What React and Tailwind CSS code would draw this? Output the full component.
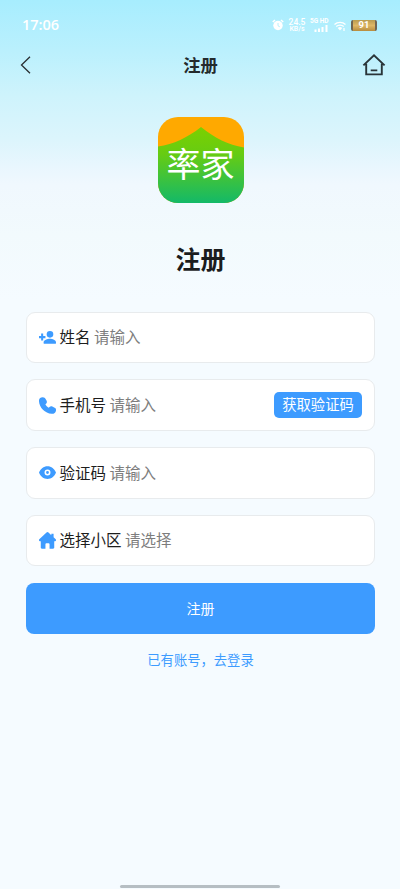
import React from "react";

const iconClass = "h-[17px] w-[17px] shrink-0 fill-[#3d9bff]";

function AddUserIcon() {
  return (
    <svg viewBox="0 0 24 24" className="h-[17px] w-[17px] shrink-0 fill-[#3d9bff]">
      <path d="M15.500 12.200a4.700 4.700 0 1 0 0-9.400 4.700 4.700 0 0 0 0 9.400ZM5.900 10V6.500H3V10H0v2.900h3v3.500h2.900v-3.500h3.200V10ZM15.500 13.600c-3.500 0-9 1.700-9 5v1c0 .8.4 1.200 1.200 1.200h15.100c.8 0 1.200-.4 1.200-1.200v-1c0-3.300-5-5-8.500-5Z" />
    </svg>
  );
}

function PhoneIcon() {
  return (
    <svg viewBox="0 0 24 24" className={iconClass}>
      <path d="M1.600 1.300C3.400 0 7 0 8.400 1.500l2.200 3.600c.9 1.600.7 3-.7 4.300L9 10.300c1 2 2.600 3.600 4.700 4.700l1.100-1c1.200-1.100 2.600-1.300 4-.5l3.900 2.200c1.200.7 1.500 1.900 1.300 3.300-.5 3.500-2.900 5-6.100 4.800C8.700 23.200.3 14.900 0 6c-.1-2 .3-3.700 1.600-4.700Z" />
    </svg>
  );
}

function EyeIcon() {
  return (
    <svg viewBox="0 0 24 24" className={iconClass}>
      <path fillRule="evenodd" d="M12 3C6.500 3 2.200 6.500 0 12c2.200 5.500 6.500 9 12 9s9.800-3.500 12-9C21.800 6.500 17.500 3 12 3Zm0 4.800a4.200 4.200 0 1 1 0 8.400 4.200 4.200 0 0 1 0-8.400Zm0 2.200a2 2 0 1 0 0 4 2 2 0 0 0 0-4Z" />
    </svg>
  );
}

function HouseIcon() {
  return (
    <svg viewBox="0 0 24 24" className={iconClass}>
      <path d="M10.600.8a2 2 0 0 1 2.800 0l4 3.700V2.600h3.200v4.900l3 2.900c1 1 .4 2.600-.9 2.600h-1.200v9c0 1-.6 1.600-1.600 1.600h-5v-6.400c0-.8-.5-1.300-1.300-1.300h-3.200c-.8 0-1.300.5-1.300 1.300v6.400h-5c-1 0-1.600-.6-1.600-1.600v-9H1.300c-1.300 0-1.900-1.600-.9-2.600Z" />
    </svg>
  );
}

function StatusBar() {
  return (
    <div className="flex h-[50px] items-center pl-[22px] pr-[23px] text-white">
      <span className="font-['Open_Sans',sans-serif] text-[14.500px] font-semibold leading-none">17:06</span>
      <div className="ml-auto flex items-center">
        <svg viewBox="0 0 24 24" className="h-3 w-3">
          <circle cx="12" cy="13" r="9.500" fill="white" />
          <path d="M1.500 6 6 2M18 2l4.500 4" stroke="white" strokeWidth="3" />
          <path d="M12 8v5.500l3.500 2" fill="none" stroke="#b6effc" strokeWidth="2" />
        </svg>
        <div className="ml-1 flex w-[18px] flex-col items-center whitespace-nowrap font-['Roboto',sans-serif] font-medium">
          <span className="block text-[8.500px] leading-[8px]">24.5</span>
          <span className="block text-[7px] leading-[7px]">KB/s</span>
        </div>
        <div className="ml-[4px] w-[19px] whitespace-nowrap font-['Roboto',sans-serif] font-bold">
          <div className="text-[6.500px] leading-[7px]">5G HD</div>
          <svg viewBox="0 0 18 7" className="h-[7px] w-[18px] fill-white">
            <path d="M4.500 4.500h2V7h-2zM8 3.500h2V7H8zM11.500 2h2v5h-2zM15.500 0h2v7h-2z" />
          </svg>
        </div>
        <svg viewBox="0 0 24 20" className="ml-[5px] mt-[2px] h-[10px] w-3" fill="none" stroke="white" strokeWidth="2.500">
          <path d="M1 7c6-6 16-6 22 0M4.500 11c4-4 11-4 15 0" />
          <path d="m7.500 14 4.500 5 4.500-5c-3-2.500-6-2.500-9 0Z" fill="white" stroke="none" />
          <path d="M20 14v6" />
        </svg>
        <div className="ml-[5px] flex h-[11px] w-[26px] items-center justify-center rounded-[2px] border-x-[2px] border-[#716552] bg-linear-to-b from-[#b99b50] via-[#dfb765] to-[#b78c3e] font-['Roboto',sans-serif] text-[9.500px] font-bold leading-none">91</div>
      </div>
    </div>
  );
}

function Header() {
  return (
    <header className="flex h-[30px] items-center justify-between pl-[20px] pr-[14px]">
      <svg viewBox="0 0 12 18" className="h-[18px] w-3" fill="none" stroke="#282d30" strokeWidth="1.300">
        <path d="M10 0.800 1.500 9l8.500 8.200" />
      </svg>
      <h1 className="ml-[7px] text-[17.300px] font-bold leading-6 text-[#242a2c]">注册</h1>
      <svg viewBox="0 0 24 24" className="h-6 w-6" fill="none" stroke="#293438" strokeWidth="1.900">
        <path d="M1.400 12.400 12 2.300l10.600 10.100M4.200 10.800v10.600h15.600V10.800M8.700 17.400h6.600" />
      </svg>
    </header>
  );
}

function Logo() {
  return (
    <div className="ml-[157.500px] mt-[37px] grid h-[85.500px] w-[86px] overflow-hidden rounded-[20px]">
      <svg viewBox="0 0 86 86" className="col-start-1 row-start-1 h-[86px] w-[86px]">
        <defs>
          <linearGradient id="hill" x1="0" y1="10" x2="0" y2="86" gradientUnits="userSpaceOnUse">
            <stop stopColor="#7bd000" />
            <stop offset=".35" stopColor="#67cc12" />
            <stop offset="1" stopColor="#13b968" />
          </linearGradient>
        </defs>
        <path fill="#ffa900" d="M0 0h86v86H0z" />
        <path fill="url(#hill)" d="M0 29.500C16 27 29 21 43 10c14 11 27 18 43 20.500V86H0Z" />
      </svg>
      <span className="z-10 col-start-1 row-start-1 mt-[6px] self-center justify-self-center whitespace-nowrap text-[34px] font-normal leading-none text-white">率家</span>
    </div>
  );
}

function Field({ icon, label, placeholder, children }) {
  return (
    <div className="flex h-[51.500px] items-center rounded-[9px] border border-[#e8ebed] bg-white pl-3 pr-[12px] text-[15.500px] leading-none">
      <div className="flex w-[20.500px] shrink-0 items-center">{icon}</div>
      <span className="mb-px whitespace-nowrap text-[#1d1d1d]">{label}</span>
      <span className="mb-px ml-[3.500px] whitespace-nowrap text-[#7d7d7d]">{placeholder}</span>
      {children}
    </div>
  );
}

export default function App() {
  return (
    <div className="flex h-[889px] w-[400px] flex-col overflow-hidden bg-[linear-gradient(180deg,#a7edfe_0px,#baf0fd_50px,#cef3fc_95px,#dcf5fc_140px,#e8f6fe_165px,#f0f8fe_185px,#f2fafd_235px,#f5fbff_300px,#f5fbff_100%)] font-['Noto_Sans_CJK_SC',sans-serif]">
      <StatusBar />
      <Header />
      <Logo />
      <h2 className="ml-[1px] mt-[37px] text-center text-[25px] font-bold leading-9 text-[#1b1c1d]">注册</h2>
      <main className="ml-[26px] mt-[36px] flex w-[349px] flex-col gap-[16.250px]">
        <Field icon={<AddUserIcon />} label="姓名" placeholder="请输入" />
        <Field icon={<PhoneIcon />} label="手机号" placeholder="请输入">
          <button className="mb-px ml-auto h-[26px] w-[88px] whitespace-nowrap rounded-[5px] bg-[#3d9bff] text-[14.300px] leading-none text-white">获取验证码</button>
        </Field>
        <Field icon={<EyeIcon />} label="验证码" placeholder="请输入" />
        <Field icon={<HouseIcon />} label="选择小区" placeholder="请选择" />
        <button className="h-[51px] rounded-[8px] bg-[#3d9bff] pb-px text-[14px] leading-none text-white">注册</button>
      </main>
      <a className="ml-[1px] mt-[16px] text-center text-[13.300px] leading-5 text-[#3d9bff]">已有账号，去登录</a>
      <div className="mx-auto mb-px mt-auto h-[3px] w-[160px] rounded-full bg-[#b6bec3]" />
    </div>
  );
}
